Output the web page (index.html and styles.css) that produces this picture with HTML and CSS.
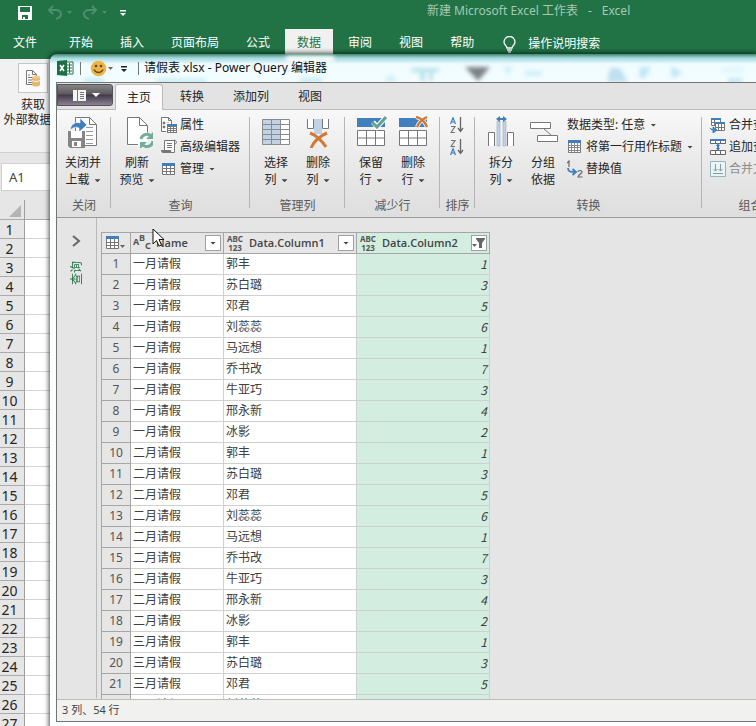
FILE: index.html
```html
<!DOCTYPE html>
<html lang="zh-CN">
<head>
<meta charset="utf-8">
<title>请假表 xlsx - Power Query 编辑器</title>
<link rel="stylesheet" href="styles.css">
</head>
<body>
<div class="desktop">
  <div class="excel">
    <header class="excel-title">
      <div class="quick">
        <button aria-label="保存"><svg width="16" height="16" viewBox="0 0 16 16"><path d="M1 1h14v14H1z" fill="#fff"/><path d="M3 2h10v5H3z" fill="#217346"/><path d="M5 10h6v4H5z" fill="#217346"/><path d="M6 12h2v2H6z" fill="#fff"/></svg></button>
        <button aria-label="撤消" class="faded"><svg width="26" height="16" viewBox="0 0 26 16"><path d="M6 1L2 5l4 4M2 5h7c3 0 5 2 5 4s-2 4-5 5" fill="none" stroke="#4f8f6e" stroke-width="2"/><path d="M20 6h5l-2.500 3z" fill="#4f8f6e"/></svg></button>
        <button aria-label="恢复" class="faded"><svg width="26" height="16" viewBox="0 0 26 16"><path d="M10 1l4 4-4 4M14 5H7C4 5 2 7 2 9s2 4 5 5" fill="none" stroke="#4f8f6e" stroke-width="2"/><path d="M20 6h5l-2.500 3z" fill="#4f8f6e"/></svg></button>
        <button aria-label="自定义快速访问工具栏"><svg width="8" height="16" viewBox="0 0 8 16"><path d="M1 5h6v1.500H1zM1 8h6l-3 3z" fill="#fff"/></svg></button>
      </div>
      <div class="book-name"><span>新建 Microsoft Excel 工作表</span><span>-</span><span>Excel</span></div>
    </header>
    <nav class="excel-tabs">
      <button class="file-tab">文件</button>
      <button>开始</button>
      <button>插入</button>
      <button>页面布局</button>
      <button>公式</button>
      <button class="active">数据</button>
      <button>审阅</button>
      <button>视图</button>
      <button>帮助</button>
      <button class="tell-me"><svg width="13" height="17" viewBox="0 0 13 17"><path d="M4 12c0-2-3-3-3-6a5.500 5.500 0 0 1 11 0c0 3-3 4-3 6zM4 14h5M5 16h3" fill="none" stroke="#fff" stroke-width="1.300"/></svg>操作说明搜索</button>
    </nav>
    <div class="excel-ribbon">
      <button class="get-data">
        <span class="get-icon"><svg width="16" height="18" viewBox="0 0 16 18"><path d="M1.500 1.500h6l4 4v10h-10z" fill="#fff" stroke="#777"/><path d="M7.500 1.500v4h4M3 6h2M3 8.500h5M3 11h4M3 13.500h4" fill="none" stroke="#777"/><path d="M7 8h8v8c-1 2-7 2-8 0z" fill="#e3b872"/><ellipse cx="11" cy="8" rx="4" ry="1.500" fill="#edcb92"/><path d="M7 11c1 2 7 2 8 0" fill="none" stroke="#fff"/></svg></span>
        <span>获取</span>
        <span>外部数据<i class="caret"></i></span>
      </button>
    </div>
    <div class="formula-bar"><input class="name-box" aria-label="名称框" value="A1"></div>
    <div class="sheet">
      <div class="corner"><svg width="12" height="12" viewBox="0 0 12 12"><path d="M12 0v12H0z" fill="#b4b4b4"/></svg></div><div class="column-head"></div>
      <b>1</b><i></i><b>2</b><i></i><b>3</b><i></i><b>4</b><i></i><b>5</b><i></i><b>6</b><i></i><b>7</b><i></i><b>8</b><i></i><b>9</b><i></i>
      <b>10</b><i></i><b>11</b><i></i><b>12</b><i></i><b>13</b><i></i><b>14</b><i></i><b>15</b><i></i><b>16</b><i></i><b>17</b><i></i><b>18</b><i></i>
      <b>19</b><i></i><b>20</b><i></i><b>21</b><i></i><b>22</b><i></i><b>23</b><i></i><b>24</b><i></i><b>25</b><i></i><b>26</b><i></i><b>27</b><i></i>
    </div>
  </div>

  <section class="window">
    <svg class="glass" width="706" height="28" viewBox="0 0 706 28" aria-hidden="true">
      <defs><filter id="soft" x="-50%" y="-50%" width="200%" height="200%"><feGaussianBlur stdDeviation="2"/></filter></defs>
      <g filter="url(#soft)">
        <path d="M361 14h28v4h-6v9h-4v-9h-4v9h-5v-9h-9z" fill="#b9e2ec"/>
        <path d="M415 13h25l-12 14z" fill="#7c8286"/>
        <path d="M455 12h6v7h-6zM475 17h17v5h-17zM336 22h9v6h-9z" fill="#cdeefa"/>
        <path d="M560 14h10l8 14h-21z" fill="#bfe0f0"/>
        <path d="M590 13h11l-6 11h-6zM621 12l12 7-11 6zM678 24h14v6h-14z" fill="#c3e6f6"/>
        <path d="M672 14h22v4h-22z" fill="#dcf5fb"/>
        <path d="M34 24h20v5H34zM106 25h50v5h-50zM250 24h22v5h-22z" fill="#c5ebf6"/>
        <path d="M236 2h48v6h-48z" fill="#fff"/>
      </g>
    </svg>
    <header class="window-title">
      <svg width="17" height="16" viewBox="0 0 17 16"><path d="M9 2h7v12H9z" fill="#fff" stroke="#217346"/><path d="M10 5h5M10 8h5M10 11h5M12.500 3v10" stroke="#217346" stroke-width="1"/><path d="M0 1l10-1v16L0 15z" fill="#1d7044"/><path d="M3 5l4 6M7 5l-4 6" stroke="#fff" stroke-width="1.600"/></svg>
      <span class="bar"></span>
      <button aria-label="反馈" class="smile"><svg width="25" height="17" viewBox="0 0 25 17"><circle cx="8.500" cy="8.500" r="7.800" fill="#efb443"/><circle cx="6" cy="6" r="1.300" fill="#5a4a35"/><circle cx="11" cy="6" r="1.300" fill="#5a4a35"/><path d="M4 9.500c2 4 7 4 9 0" fill="none" stroke="#5a4a35" stroke-width="1.400"/><path d="M18 7h5l-2.500 3z" fill="#666"/></svg></button>
      <button aria-label="自定义" class="customize"><svg width="8" height="16" viewBox="0 0 8 16"><path d="M1 6h6v1.500H1zM1 9h6l-3 3z" fill="#222"/></svg></button>
      <span class="bar last"></span>
      <h1>请假表 xlsx - Power Query 编辑器</h1>
    </header>
    <div class="window-body">
      <nav class="tabs">
        <button class="app-menu" aria-label="文件"><svg width="28" height="13" viewBox="0 0 28 13"><path d="M1 1h13v11H1z" fill="#f3f3f3"/><path d="M5.500 1v11" stroke="#777"/><path d="M8 3.500h4M8 5.500h4M8 7.500h4M8 9.500h4" stroke="#777"/><path d="M20 4h8l-4 4z" fill="#fff"/></svg></button>
        <button class="active">主页</button>
        <button>转换</button>
        <button>添加列</button>
        <button>视图</button>
      </nav>
      <div class="ribbon">
        <div class="group g-close">
          <div class="tools">
            <button class="big"><svg width="32" height="32" viewBox="0 0 32 32"><path d="M8.500 1.500h14l7 7v21h-21z" fill="#fff" stroke="#777"/><path d="M22.500 1.500v7h7" fill="none" stroke="#777"/><path d="M19 11.500h7M19 15.500h7M19 19.500h7M19 23.500h7M19 27.500h7" stroke="#999"/><path d="M3 14c1-6 6-9 10-7V2l7 7-8 7v-4c-4-2-6 0-9 2z" fill="#3f7fbd" stroke="#fff" stroke-width=".6"/><path d="M1 15h17v17H3l-2-2z" fill="#858585"/><path d="M4 15h11v7H4z" fill="#fff"/><path d="M5 25h9v6H5z" fill="#fff"/><path d="M7 26h3v4H7z" fill="#858585"/></svg><span>关闭并</span><span>上载<i class="caret"></i></span></button>
          </div>
          <h2>关闭</h2>
        </div>
        <div class="group g-query">
          <div class="tools">
            <button class="big"><svg width="32" height="32" viewBox="0 0 32 32"><path d="M6.500 1.500h12l8 8v20h-20z" fill="#fff"/><path d="M17 28.500H6.500v-27h12l8 8v7M18.500 1.500v8h8" fill="none" stroke="#777"/><path d="M20 23a6 6 0 0 1 10-3M32 25a6 6 0 0 1-10 4" fill="none" stroke="#72ac9c" stroke-width="3"/><path d="M32 16v7h-7zM19 33v-7h7z" fill="#72ac9c"/></svg><span>刷新</span><span>预览<i class="caret"></i></span></button>
            <div class="stack">
              <button><svg width="16" height="16" viewBox="0 0 16 16"><path d="M5 14.500H.500V.500h7l3 3V7M7.500.500v3h3" fill="#fff" stroke="#777"/><path d="M2 5h2v2H2zM2 9h2v2H2zM6 5.500h2" fill="#777" stroke="#777" stroke-width=".5"/><path d="M6 7h10v9H6z" fill="#777"/><path d="M6 7h10v2H6z" fill="#3f7fbd"/><path d="M7 10h2v1H7zM10 10h2v1h-2zM13 10h2v1h-2zM7 12h2v1H7zM10 12h2v1h-2zM13 12h2v1h-2zM7 14h2v1H7zM10 14h2v1h-2zM13 14h2v1h-2z" fill="#fff"/></svg>属性</button>
              <button><svg width="16" height="16" viewBox="0 0 16 16"><path d="M3.500 12V1.500h10v12h-10z" fill="#fff" stroke="#777"/><path d="M13 1c3 0 3 4 1 4M6 4.500h5M6 6.500h5M6 8.500h5" fill="none" stroke="#777"/><path d="M0 11h10c0 2 1 3 2 3H2c-1 0-2-1-2-3z" fill="#777"/></svg>高级编辑器</button>
              <button><svg width="16" height="14" viewBox="0 0 16 14"><path d="M1.500 1.500h12v11H1.500z" fill="#fff" stroke="#777"/><path d="M1 1h13v3H1z" fill="#3f7fbd"/><path d="M1 6.500h13M1 9.500h13M5.500 4v9M9.500 4v9" stroke="#777"/></svg>管理<i class="caret"></i></button>
            </div>
          </div>
          <h2>查询</h2>
        </div>
        <div class="group g-columns">
          <div class="tools">
            <button class="big"><svg width="32" height="32" viewBox="0 0 32 32"><path d="M2.500 3.500h27v25h-27z" fill="#fff"/><path d="M3 4h17v24H3z" fill="#c0d2e6"/><path d="M2.500 3.500h27v25h-27zM2 8.500h28M2 13.500h28M2 18.500h28M2 23.500h28M11.500 3v26M20.500 3v26" fill="none" stroke="#8a8a8a"/></svg><span>选择</span><span>列<i class="caret"></i></span></button>
            <button class="big"><svg width="32" height="32" viewBox="0 0 32 32"><path d="M5.500 3v9.500h6V3M20.500 3v9.500h6V3" fill="#fff" stroke="#777"/><path d="M12 3h8v15h-8z" fill="#c0d2e6"/><path d="M8 17c6 2 13 9 16 14M25 17C18 20 12 25 9 32" fill="none" stroke="#cf7a36" stroke-width="3"/></svg><span>删除</span><span>列<i class="caret"></i></span></button>
          </div>
          <h2>管理列</h2>
        </div>
        <div class="group g-rows">
          <div class="tools">
            <button class="big"><svg width="32" height="32" viewBox="0 0 32 32"><path d="M2 2h28v9H2z" fill="#4080bd"/><path d="M2.500 14.500h27v15h-27zM2 22h28M11.500 14v16M20.500 14v16" fill="#fff" stroke="#777"/><path d="M18 6l4 5L31 1" fill="none" stroke="#fff" stroke-width="5"/><path d="M17 6l5 5L31 1" fill="none" stroke="#62a48d" stroke-width="3"/></svg><span>保留</span><span>行<i class="caret"></i></span></button>
            <button class="big"><svg width="32" height="32" viewBox="0 0 32 32"><path d="M2 2h28v9H2z" fill="#4080bd"/><path d="M2.500 14.500h27v15h-27zM2 22h28M11.500 14v16M20.500 14v16" fill="#fff" stroke="#777"/><path d="M19 1c5 1 9 5 11 10M30 1c-4 2-8 5-10 10" fill="none" stroke="#fff" stroke-width="4"/><path d="M19 1c5 1 9 5 11 10M30 1c-4 2-8 5-10 10" fill="none" stroke="#cf7a36" stroke-width="2.500"/></svg><span>删除</span><span>行<i class="caret"></i></span></button>
          </div>
          <h2>减少行</h2>
        </div>
        <div class="group g-sort">
          <div class="tools">
            <div class="stack sort">
              <button aria-label="升序排序"><svg width="14" height="17" viewBox="0 0 14 17"><path d="M0.500 7L3 .700 5.500 7M1.500 5h3" fill="none" stroke="#3f7fbd" stroke-width="1.200"/><path d="M1 9.500h4L1 15.500h4" fill="none" stroke="#777" stroke-width="1.200"/><path d="M10.500 0v14M8 11l2.500 3.500L13 11" fill="none" stroke="#666" stroke-width="1.300"/></svg></button>
              <button aria-label="降序排序"><svg width="14" height="17" viewBox="0 0 14 17"><path d="M0.500 16L3 9.700 5.500 16M1.500 14h3" fill="none" stroke="#3f7fbd" stroke-width="1.200"/><path d="M1 1.500h4L1 7.500h4" fill="none" stroke="#777" stroke-width="1.200"/><path d="M10.500 0v14M8 11l2.500 3.500L13 11" fill="none" stroke="#666" stroke-width="1.300"/></svg></button>
            </div>
          </div>
          <h2>排序</h2>
        </div>
        <div class="group g-transform">
          <div class="tools">
            <button class="big"><svg width="32" height="32" viewBox="0 0 32 32"><path d="M3.500 30V16.500h6V30M22.500 30V16.500h6V30" fill="#fff" stroke="#777"/><path d="M12 5h3v25h-3zM18 5h3v25h-3z" fill="#c0d2e6" stroke="#9aabbd" stroke-width=".6"/><path d="M11 3l4-3v2h3V0l4 3-4 3V4h-3v2z" fill="#3f7fbd"/></svg><span>拆分</span><span>列<i class="caret"></i></span></button>
            <button class="big"><svg width="32" height="32" viewBox="0 0 32 32"><path d="M3.500 6.500h20v6h-20zM10.500 19.500h20v6h-20z" fill="#fff" stroke="#777"/><path d="M17 13l7 6" stroke="#777"/></svg><span>分组</span><span>依据</span></button>
            <div class="stack">
              <button>数据类型: 任意<i class="caret"></i></button>
              <button><svg width="16" height="14" viewBox="0 0 16 14"><path d="M1.500.500h12v12H1.500z" fill="#fff" stroke="#777"/><path d="M1 0h13v3H1z" fill="#3f7fbd"/><path d="M1 5.500h13M1 7.500h13M1 10.500h13M4.500 3v10M7.500 3v10M10.500 3v10" stroke="#888"/></svg>将第一行用作标题<i class="caret"></i></button>
              <button><svg width="16" height="18" viewBox="0 0 16 18"><path d="M0 3l2-2v6" fill="none" stroke="#666" stroke-width="1.200"/><path d="M11 12c0-2 4-2 4 0 0 1-4 3-4 5h4.500" fill="none" stroke="#666" stroke-width="1.200"/><path d="M1 8c0 4 3 4 7 4M5.500 9L9 12l-3.500 3" fill="none" stroke="#3f7fbd" stroke-width="1.800"/></svg>替换值</button>
            </div>
          </div>
          <h2>转换</h2>
        </div>
        <div class="group g-combine">
          <div class="tools">
            <div class="stack">
              <button><svg width="16" height="16" viewBox="0 0 16 16"><path d="M1.500 1.500h9v7h-9z" fill="#fff" stroke="#777"/><path d="M1 1h10v2H1z" fill="#3f7fbd"/><path d="M4.500 3v6M1 5.500h9" stroke="#777"/><path d="M5.500 5.500h9v8h-9z" fill="#fff" stroke="#777"/><path d="M5 5h10v2H5z" fill="#3f7fbd"/><path d="M8.500 7v7M11.500 7v7M5 10.500h10" stroke="#777"/><path d="M0 11c1 2 3 2 5 2M3 10l4 3-4 3z" fill="#3f7fbd" stroke="#3f7fbd"/></svg>合并查询<i class="caret"></i></button>
              <button><svg width="16" height="16" viewBox="0 0 16 16"><path d="M.500.500h15v4H.500zM.500 11.500h15v4H.500zM5.500 2v3M10.500 2v3M5.500 12v3M10.500 12v3" fill="#fff" stroke="#666"/><path d="M0 0h16v2H0zM8 4l2 3H6zM8 12L6 9h4zM7 6h2v4H7z" fill="#3f7fbd"/></svg>追加查询<i class="caret"></i></button>
              <button disabled><svg width="16" height="16" viewBox="0 0 16 16"><path d="M.500.500h15v15H.500z" fill="#e6f5f6" stroke="#9ab5ba"/><path d="M5.500 3v7M3.500 8l2 2 2-2M10.500 3v7M8.500 8l2 2 2-2M3 12.500h10" fill="none" stroke="#8a9a9e"/></svg>合并文件</button>
            </div>
          </div>
          <h2>组合</h2>
        </div>
      </div>
      <main class="workspace">
        <aside class="queries">
          <button aria-label="展开"><svg width="9" height="12" viewBox="0 0 9 12"><path d="M1 1l6 5-6 5" fill="none" stroke="#666" stroke-width="2"/></svg></button>
          <span>查询</span>
        </aside>
        <div class="grid-area">
          <table>
            <colgroup><col class="c-num"><col class="c-name"><col class="c-one"><col class="c-two"></colgroup>
            <thead>
              <tr>
                <th><button class="table-menu" aria-label="表菜单"><svg width="20" height="14" viewBox="0 0 20 14"><path d="M.500.500h12v12H.500z" fill="#fff" stroke="#777"/><path d="M0 0h13v3H0z" fill="#3f7fbd"/><path d="M0 6.500h13M0 9.500h13M4.500 3v10M8.500 3v10" stroke="#777"/><path d="M14 9h5l-2.500 3z" fill="#666"/></svg></button></th>
                <th><div class="head"><span class="type abc"><span>A</span><span>B</span><span>C</span></span><span class="label">Name</span><button aria-label="筛选 Name"><i class="caret"></i></button></div></th>
                <th><div class="head"><span class="type"><span>ABC</span><span>123</span></span><span class="label">Data.Column1</span><button aria-label="筛选 Data.Column1"><i class="caret"></i></button></div></th>
                <th class="picked"><div class="head"><span class="type"><span>ABC</span><span>123</span></span><span class="label">Data.Column2</span><button aria-label="筛选 Data.Column2"><svg width="14" height="12" viewBox="0 0 14 12"><path d="M4 1h9v1L10 6v5H7V6L4 2zM0 7h5L2.500 10z" fill="#666"/></svg></button></div></th>
              </tr>
            </thead>
            <tbody>
              <tr><th>1</th><td>一月请假</td><td>郭丰</td><td>1</td></tr>
              <tr><th>2</th><td>一月请假</td><td>苏白璐</td><td>3</td></tr>
              <tr><th>3</th><td>一月请假</td><td>邓君</td><td>5</td></tr>
              <tr><th>4</th><td>一月请假</td><td>刘蕊蕊</td><td>6</td></tr>
              <tr><th>5</th><td>一月请假</td><td>马远想</td><td>1</td></tr>
              <tr><th>6</th><td>一月请假</td><td>乔书改</td><td>7</td></tr>
              <tr><th>7</th><td>一月请假</td><td>牛亚巧</td><td>3</td></tr>
              <tr><th>8</th><td>一月请假</td><td>邢永新</td><td>4</td></tr>
              <tr><th>9</th><td>一月请假</td><td>冰影</td><td>2</td></tr>
              <tr><th>10</th><td>二月请假</td><td>郭丰</td><td>1</td></tr>
              <tr><th>11</th><td>二月请假</td><td>苏白璐</td><td>3</td></tr>
              <tr><th>12</th><td>二月请假</td><td>邓君</td><td>5</td></tr>
              <tr><th>13</th><td>二月请假</td><td>刘蕊蕊</td><td>6</td></tr>
              <tr><th>14</th><td>二月请假</td><td>马远想</td><td>1</td></tr>
              <tr><th>15</th><td>二月请假</td><td>乔书改</td><td>7</td></tr>
              <tr><th>16</th><td>二月请假</td><td>牛亚巧</td><td>3</td></tr>
              <tr><th>17</th><td>二月请假</td><td>邢永新</td><td>4</td></tr>
              <tr><th>18</th><td>二月请假</td><td>冰影</td><td>2</td></tr>
              <tr><th>19</th><td>三月请假</td><td>郭丰</td><td>1</td></tr>
              <tr><th>20</th><td>三月请假</td><td>苏白璐</td><td>3</td></tr>
              <tr><th>21</th><td>三月请假</td><td>邓君</td><td>5</td></tr>
              <tr><th>22</th><td>三月请假</td><td>刘蕊蕊</td><td>6</td></tr>
            </tbody>
          </table>
        </div>
      </main>
      <footer class="status">3 列、54 行</footer>
    </div>
  </section>
  <svg class="pointer" width="14" height="20" viewBox="0 0 14 20" aria-hidden="true"><path d="M1 1v15l3.500-3.500L7 18l2.500-1-2.500-5.500h5z" fill="#fff" stroke="#111"/></svg>
</div>
</body>
</html>
```
FILE: styles.css
```css
* { box-sizing: border-box; }
body, h1, h2 { margin: 0; }
body {
  font: 12px/16px "Noto Sans", "Noto Sans CJK SC", sans-serif;
  color: #262626;
}
button {
  margin: 0;
  padding: 0;
  border: 0;
  background: none;
  color: inherit;
  font: inherit;
  white-space: nowrap;
}
svg { display: block; flex: none; }
h1, h2, i { font-size: 12px; font-weight: 400; font-style: normal; }
.caret {
  display: inline-block;
  width: 6px;
  height: 3px;
  margin-left: 5px;
  vertical-align: middle;
  background: #444;
  clip-path: polygon(0 0, 100% 0, 50% 100%);
}

.desktop {
  position: relative;
  height: 100vh;
  overflow: hidden;
}

/* workbook behind */
.excel {
  display: flex;
  flex-direction: column;
  height: 100%;
  overflow: hidden;
}
.excel-title {
  flex: none;
  display: flex;
  height: 29px;
  background: #217346;
  color: #a6c9b5;
}
.quick {
  display: flex;
  align-items: center;
  gap: 9px;
  width: 427px;
  padding: 0 0 4px 17px;
}
.quick button:nth-child(2) { margin-left: 5px; }
.quick button:last-child { margin-left: 2px; }
.book-name { display: flex; gap: 10px; padding-top: 3px; white-space: nowrap; }
.excel-tabs {
  flex: none;
  display: flex;
  gap: 3px;
  height: 30px;
  padding-left: 1px;
  background: #217346;
  color: #fff;
}
.excel-tabs button {
  display: flex;
  padding: 0 12px;
  line-height: 28px;
}
.excel-tabs .file-tab { margin-right: 5px; }
.excel-tabs .active { background: #f1f1f1; color: #217346; }
.excel-tabs .tell-me { align-items: center; gap: 12px; padding-left: 14px; }
.excel-ribbon {
  flex: none;
  height: 94px;
  padding: 4px 0 0 1px;
  background: #f1f1f1;
  border-bottom: 1px solid #d0d0d0;
}
.get-data {
  display: flex;
  flex-direction: column;
  align-items: center;
  width: 64px;
  line-height: 15px;
}
.get-icon {
  display: grid;
  place-items: center;
  width: 30px;
  height: 30px;
  margin-bottom: 4px;
  border: 1px solid #c6c6c6;
  background: #fafafa;
}
.formula-bar {
  flex: none;
  height: 47px;
  padding: 10px 1px;
  background: #e6e6e6;
}
.name-box {
  width: 64px;
  height: 28px;
  padding: 0 7px;
  border: 1px solid #d0d0d0;
  background: #fff;
  color: #444;
  font: 13px "Noto Sans", sans-serif;
}
.sheet {
  display: grid;
  grid-template-columns: 25px 1fr;
  grid-template-rows: 20px;
  grid-auto-rows: 19px;
}
.corner, .column-head, .sheet b {
  background: #e6e6e6;
  border-right: 1px solid #9f9f9f;
  border-bottom: 1px solid #ababab;
}
.corner { padding: 5px 0 0 9px; }
.sheet b {
  padding-right: 5px;
  color: #262626;
  font: 14px/20px "Noto Sans", sans-serif;
  text-align: center;
}
.sheet i { background: #fff; border-bottom: 1px solid #d4d4d4; }

/* editor window on top */
.window {
  position: absolute;
  inset: 54px 0 -3px 50px;
  display: flex;
  flex-direction: column;
  padding: 0 0 7px 6px;
  border-top-left-radius: 7px;
  background: linear-gradient(#3f8a6a 0, #a4d8e0 4px, #effcff 10px, #fafeff 60px);
  box-shadow: 0 0 5px 1px rgba(0, 0, 0, .7);
}
.glass { position: absolute; inset: 0 auto auto 0; }
.window-title {
  position: relative;
  flex: none;
  display: flex;
  align-items: center;
  height: 28px;
  padding-left: 1px;
}
.window-title h1 { margin-left: 5px; color: #111; white-space: nowrap; }
.bar { width: 1px; height: 13px; margin-left: 6px; background: #777; }
.bar.last { margin-left: 10px; }
.smile { margin-left: 9px; }
.customize { margin-left: 5px; }
.window-body {
  position: relative;
  flex: 1;
  min-height: 0;
  display: flex;
  flex-direction: column;
  border: solid #747474;
  border-width: 1px 0 1px 1px;
  background: #e5e5e5;
}
.tabs {
  flex: none;
  display: flex;
  gap: 5px;
  height: 27px;
  padding-top: 1px;
  border-bottom: 1px solid #bcbcbc;
  background: #e3e3e3;
}
.tabs button { padding: 0 12px; }
.tabs .active {
  margin-bottom: -1px;
  border: solid #bcbcbc;
  border-width: 1px 1px 0;
  border-radius: 3px 3px 0 0;
  padding: 0 11px;
  background: #fafafa;
}
.tabs .app-menu {
  height: 22px;
  margin-right: -3px;
  padding: 0 12px 0 14px;
  border: 1px solid #55505a;
  border-radius: 0 3px 3px 0;
  background: linear-gradient(#858585, #5d5a5e 45%, #40394a 50%, #8b8391);
}
.ribbon {
  flex: none;
  display: flex;
  height: 108px;
  padding-top: 4px;
  overflow: hidden;
  border-bottom: 1px solid #999;
  background: linear-gradient(#f8f8f8, #e9e9e9 50%, #dedede);
}
.group {
  flex: none;
  display: flex;
  flex-direction: column;
  justify-content: space-between;
  padding: 0 4px 3px;
  position: relative;
}
.group::after {
  content: "";
  position: absolute;
  inset: 3px 0 9px auto;
  width: 1px;
  background: #b5b5b5;
}
.group h2 { color: #595959; text-align: center; white-space: nowrap; }
.g-close { width: 54px; }
.g-query { width: 139px; }
.g-columns, .g-rows { width: 95px; }
.g-sort { width: 35px; }
.g-transform { width: 227px; }
.g-combine { padding-left: 8px; width: 93px; }
.tools { display: flex; }
.big {
  display: flex;
  flex-direction: column;
  align-items: center;
  width: 44px;
  padding-top: 2px;
  line-height: 17px;
}
.big + .big { margin-left: -2px; }
.big svg { margin-bottom: 6px; }
.stack { display: flex; flex-direction: column; }
.big + .stack { margin-left: 2px; }
.stack button {
  display: flex;
  align-items: center;
  gap: 3px;
  height: 22px;
}
.stack button:disabled { color: #8b8b8b; }
.stack .caret { margin-left: 2px; }
.sort { padding: 0 6px; }
.workspace { flex: 1; min-height: 0; display: flex; }
.queries {
  display: flex;
  flex-direction: column;
  align-items: center;
  gap: 14px;
  width: 40px;
  margin-bottom: 1px;
  padding-top: 17px;
  border-right: 1px solid #b9b9b9;
  color: #217346;
}
.queries span {
  writing-mode: vertical-rl;
  text-orientation: sideways;
  transform: rotate(180deg);
}
.grid-area { flex: 1; overflow: hidden; padding: 14px 0 0 4px; }
table {
  width: 389px;
  table-layout: fixed;
  border-collapse: collapse;
  background: #fff;
  color: #404040;
}
.c-num { width: 29px; }
.c-name { width: 93px; }
.c-one, .c-two { width: 133px; }
tr { height: 21px; }
th, td {
  height: 21px;
  padding: 0 2px;
  border: 1px solid #d0d0d0;
  line-height: 18px;
}
th {
  border-color: #a6a6a6;
  background: #e6e6e6;
  color: #555;
  font-weight: 400;
}
td { text-align: left; }
td:last-child {
  background: #d3eee0;
  font-family: "Noto Sans CJK SC", sans-serif;
  font-style: italic;
  text-align: right;
}
thead th.picked { background: #d3eee0; }
.table-menu { display: block; margin-left: 2px; }
.head { display: flex; align-items: center; height: 20px; }
.head .label {
  flex: 1;
  padding-left: 5px;
  color: #444;
  font: 600 11px/18px "Open Sans", sans-serif;
  text-align: left;
}
.head button {
  display: grid;
  place-items: center;
  width: 16px;
  height: 16px;
  border: 1px solid #a0a0a0;
  background: #fff;
}
.head .caret { margin: 0; }
.type {
  display: grid;
  width: 18px;
  color: #555;
  font: bold 8px/9px "Noto Sans", sans-serif;
}
.abc { grid-template-columns: repeat(3, 6px); font-size: 9px; }
.abc span:nth-child(2) { padding-bottom: 4px; margin-top: -4px; }
.abc span:nth-child(3) { margin-top: 4px; }
.status {
  flex: none;
  height: 22px;
  padding: 2px 5px;
  border-top: 1px solid #bdbdbd;
  background: #f1f1f0;
  color: #444;
  font-size: 11px;
}
.pointer { position: absolute; left: 152px; top: 228px; }
```
